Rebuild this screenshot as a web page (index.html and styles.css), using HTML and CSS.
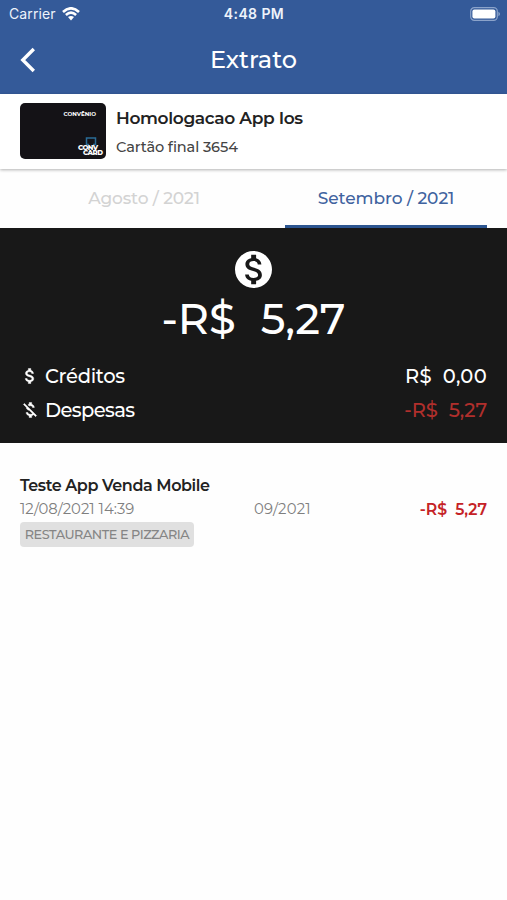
FILE: index.html
```html
<!DOCTYPE html>
<html lang="pt-BR">
<head>
    <meta charset="UTF-8">
    <meta name="viewport" content="width=device-width, initial-scale=1.0">
    <title>Extrato</title>
    <link rel="stylesheet" href="styles.css">
</head>
<body>
    <header>
        <div class="status-bar">
            <div class="carrier">
                <span>Carrier</span>
                <svg class="wifi" viewBox="0 0 18 14">
                    <path d="M1 5 Q9 -2.4 17 5" />
                    <path d="M3.9 8 Q9 3.4 14.1 8" />
                    <path class="dot" d="M6 10.1 Q9 7.7 12 10.1 L9 13.4 Z" />
                </svg>
            </div>
            <span class="time">4:48 PM</span>
            <svg class="battery" viewBox="0 0 30 14">
                <rect class="frame" x="0.7" y="0.7" width="26.6" height="12.6" rx="3.6" />
                <rect class="level" x="2.4" y="2.4" width="23" height="9.2" rx="2" />
                <path class="cap" d="M28.4 4.8 Q30 5.5 30 7 Q30 8.5 28.4 9.2 Z" />
            </svg>
        </div>
        <div class="nav-bar">
            <svg class="back" viewBox="0 0 16 26">
                <path d="M13.8 2 L2.8 13 L13.8 24" />
            </svg>
            <h1>Extrato</h1>
        </div>
    </header>

    <div class="account">
        <div class="card">
            <span class="card-type">CONVÊNIO</span>
            <div class="card-logo">
                <svg viewBox="0 0 12 9">
                    <path d="M4 7.5 H1.5 V1 H10.5 V7.5 H8" />
                </svg>
                <span>CONV</span>
                <span class="second">CARD</span>
            </div>
        </div>
        <div class="account-info">
            <h2>Homologacao App Ios</h2>
            <p>Cartão final 3654</p>
        </div>
    </div>

    <div class="tabs">
        <div class="tab"><span>Agosto / 2021</span></div>
        <div class="tab active"><span>Setembro / 2021</span></div>
    </div>

    <div class="summary">
        <svg class="coin" viewBox="2 2 20 20">
            <path d="M12 2C6.48 2 2 6.48 2 12s4.48 10 10 10 10-4.48 10-10S17.52 2 12 2zm1.41 16.09V20h-2.67v-1.93c-1.71-.36-3.16-1.46-3.27-3.4h1.96c.1 1.05.82 1.87 2.65 1.87 1.96 0 2.4-.98 2.4-1.59 0-.83-.44-1.61-2.67-2.14-2.48-.6-4.18-1.62-4.18-3.67 0-1.72 1.39-2.84 3.11-3.21V4h2.67v1.95c1.86.45 2.79 1.86 2.85 3.39H14.3c-.05-1.11-.64-1.87-2.22-1.87-1.5 0-2.4.68-2.4 1.64 0 .84.65 1.39 2.67 1.91s4.18 1.39 4.18 3.91c-.01 1.83-1.38 2.83-3.12 3.16z" />
        </svg>
        <div class="total"><span>-R$</span><span>5,27</span></div>
        <div class="row">
            <svg viewBox="0 0 24 24">
                <path d="M11.8 10.9c-2.27-.59-3-1.2-3-2.15 0-1.09 1.01-1.85 2.7-1.85 1.78 0 2.44.85 2.5 2.1h2.21c-.07-1.72-1.12-3.3-3.21-3.81V3h-3v2.16c-1.94.42-3.5 1.68-3.5 3.61 0 2.31 1.91 3.46 4.7 4.13 2.5.6 3 1.48 3 2.41 0 .69-.49 1.79-2.7 1.79-2.06 0-2.87-.92-2.98-2.1h-2.2c.12 2.19 1.76 3.42 3.68 3.83V21h3v-2.15c1.95-.37 3.5-1.5 3.5-3.55 0-2.84-2.43-3.81-4.7-4.4z" />
            </svg>
            <span class="label credit">Créditos</span>
            <span class="value positive"><span>R$</span><span>0,00</span></span>
        </div>
        <div class="row">
            <svg viewBox="0 0 24 24">
                <path d="M12.5 6.9c1.78 0 2.44.85 2.5 2.1h2.21c-.07-1.72-1.12-3.3-3.21-3.81V3h-3v2.16c-.53.12-1.03.3-1.48.54l1.47 1.47c.41-.17.91-.27 1.51-.27zM5.33 4.06L4.06 5.33 7.5 8.77c0 2.08 1.56 3.21 3.91 3.91l3.51 3.51c-.34.48-1.05.91-2.42.91-2.06 0-2.87-.92-2.98-2.1h-2.2c.12 2.19 1.76 3.42 3.68 3.83V21h3v-2.15c.96-.18 1.82-.55 2.45-1.12l2.22 2.22 1.27-1.27L5.33 4.06z" />
            </svg>
            <span class="label debit">Despesas</span>
            <span class="value negative"><span>-R$</span><span>5,27</span></span>
        </div>
    </div>

    <div class="entry">
        <h3>Teste App Venda Mobile</h3>
        <div class="entry-line">
            <span class="date">12/08/2021 14:39</span>
            <span class="period">09/2021</span>
            <span class="amount"><span>-R$</span><span>5,27</span></span>
        </div>
        <span class="tag">RESTAURANTE E PIZZARIA</span>
    </div>
</body>
</html>
```
FILE: styles.css
```css
* {
    box-sizing: border-box;
}
body {
    font-family: Montserrat, Inter, "Open Sans", sans-serif;
    background-color: #fefefe;
    color: #222;
    margin: 0;
    min-height: 100vh;
    overflow: hidden;
}
h1, h2, h3, p {
    margin: 0;
}
header {
    background-color: #345a99;
    color: #fff;
    height: 94px;
}
.status-bar {
    display: grid;
    grid-template-columns: 1fr auto 1fr;
    align-items: center;
    height: 27px;
    padding: 0 8px 0 9px;
    font-family: Inter, sans-serif;
    font-size: 14px;
    color: #eef3fb;
}
.carrier {
    display: flex;
    align-items: center;
    gap: 6px;
    letter-spacing: 0.1px;
}
.wifi {
    width: 18px;
    height: 14px;
    fill: none;
    stroke: #fff;
    stroke-width: 2.6;
}
.wifi .dot {
    fill: #fff;
    stroke: none;
}
.time {
    font-weight: 600;
    letter-spacing: 0.4px;
}
.battery {
    width: 30px;
    height: 14px;
    justify-self: end;
    margin-right: -1px;
}
.battery .frame {
    fill: none;
    stroke: #8ba3ca;
    stroke-width: 1.2;
}
.battery .level {
    fill: #fff;
}
.battery .cap {
    fill: #8ba3ca;
}
.nav-bar {
    display: grid;
    grid-template-columns: 60px 1fr 60px;
    align-items: center;
    height: 66px;
}
.back {
    width: 16px;
    height: 26px;
    margin-left: 20px;
    fill: none;
    stroke: #fff;
    stroke-width: 3.4;
}
.nav-bar h1 {
    padding-bottom: 2px;
    font-size: 24px;
    font-weight: 500;
    text-align: center;
}
.account {
    display: flex;
    gap: 10px;
    height: 75px;
    padding: 9px 20px;
    background-color: #fff;
    box-shadow: 0 1px 3px rgba(0, 0, 0, 0.3);
}
.card {
    display: flex;
    flex-direction: column;
    align-items: flex-end;
    justify-content: space-between;
    width: 86px;
    height: 56px;
    padding: 7px 4px 4px 0;
    border-radius: 5px;
    background-color: #141216;
    color: #fff;
}
.card-type {
    margin-right: 6px;
    font-size: 5.7px;
    font-weight: 700;
    line-height: 8px;
}
.card-logo {
    display: flex;
    flex-direction: column;
    width: 24px;
    font-size: 7px;
    font-weight: 800;
    line-height: 5px;
    letter-spacing: -0.5px;
}
.card-logo svg {
    width: 12px;
    height: 9px;
    margin-left: 7px;
    margin-bottom: -1px;
    fill: none;
    stroke: #2a6c97;
    stroke-width: 1.5;
}
.card-logo .second {
    margin-left: 5px;
}
.account-info h2 {
    margin-top: 4px;
    font-size: 17px;
    font-weight: 600;
    line-height: 22px;
    letter-spacing: -0.35px;
}
.account-info p {
    margin-top: 8px;
    font-size: 14.5px;
    font-weight: 500;
    line-height: 20px;
    letter-spacing: -0.1px;
    color: #444;
}
.tabs {
    display: flex;
    height: 59px;
    padding: 0 20px;
}
.tab {
    flex: 1;
    display: flex;
    align-items: center;
    justify-content: center;
    padding-bottom: 2px;
    font-size: 17px;
    font-weight: 500;
    letter-spacing: -0.12px;
    color: #d3d3d3;
}
.tab:first-child {
    flex: 0 0 265px;
    padding-right: 17px;
}
.tab.active {
    color: #40639f;
    border-bottom: 3px solid #2c5590;
    padding-top: 1px;
    padding-bottom: 0;
    letter-spacing: -0.05px;
}
.summary {
    height: 215px;
    padding: 23px 20px 0;
    background-color: #181818;
    color: #fff;
}
.coin {
    display: block;
    width: 37px;
    height: 37px;
    margin: 0 auto;
    fill: #fff;
}
.total {
    display: flex;
    justify-content: center;
    gap: 25px;
    height: 60px;
    font-size: 43px;
    font-weight: 500;
    line-height: 61px;
    letter-spacing: -0.1px;
    margin-bottom: 11px;
}
.row {
    display: flex;
    align-items: center;
    height: 34px;
    font-size: 19.5px;
    font-weight: 500;
}
.row svg {
    width: 20px;
    height: 20px;
    margin-right: 5px;
    fill: #fff;
    stroke: #fff;
    stroke-width: 0.5;
}
.label {
    letter-spacing: -0.3px;
}
.label.debit {
    letter-spacing: -0.6px;
}
.value {
    display: flex;
    gap: 11px;
    margin-left: auto;
}
.value.positive {
    letter-spacing: 0.3px;
}
.value.negative {
    color: #b02f2c;
    letter-spacing: -0.1px;
}
.entry {
    padding: 31px 20px;
}
.entry h3 {
    font-size: 16px;
    font-weight: 600;
    line-height: 23px;
    letter-spacing: -0.42px;
}
.entry-line {
    display: grid;
    grid-template-columns: 234px 1fr auto;
    align-items: center;
    height: 25px;
    font-size: 14.8px;
    color: #7f7f7f;
}
.date, .period {
    padding-bottom: 2px;
}
.period {
    letter-spacing: 0.2px;
}
.amount {
    display: flex;
    gap: 8px;
    font-size: 15.7px;
    font-weight: 600;
    color: #c52226;
}
.tag {
    display: block;
    width: 174px;
    height: 25px;
    border-radius: 4px;
    background-color: #e0e0e0;
    color: #858585;
    font-size: 12.8px;
    font-weight: 500;
    letter-spacing: -0.46px;
    line-height: 26px;
    text-align: center;
    white-space: nowrap;
}
```
